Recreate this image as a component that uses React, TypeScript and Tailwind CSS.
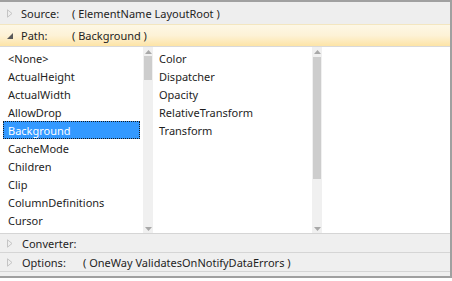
import React from 'react';

const leftItems = [
  '<None>',
  'ActualHeight',
  'ActualWidth',
  'AllowDrop',
  'Background',
  'CacheMode',
  'Children',
  'Clip',
  'ColumnDefinitions',
  'Cursor',
];

const rightItems = ['Color', 'Dispatcher', 'Opacity', 'RelativeTransform', 'Transform'];

const Collapsed = () => (
  <svg width="6" height="9" viewBox="0 0 6 9" className="shrink-0">
    <path d="M0.5 0.8 L5 4.5 L0.5 8.2 Z" fill="none" stroke="#c4c4c4" strokeWidth="1" />
  </svg>
);

const Expanded = () => (
  <svg width="6" height="6" viewBox="0 0 6 6" className="shrink-0">
    <path d="M6 0 L6 6 L0 6 Z" fill="#595959" />
  </svg>
);

const ScrollBar = ({ thumbTop, thumbHeight }: { thumbTop: number; thumbHeight: number }) => (
  <div className="relative w-[10px] h-full bg-[#f0f0f0] shrink-0">
    <svg width="7" height="4" viewBox="0 0 7 4" className="absolute left-[1.5px] top-[3px]">
      <path d="M3.5 0 L7 4 L0 4 Z" fill="#a8a8a8" />
    </svg>
    <div
      className="absolute left-[1px] w-[8px] bg-[#cdcdcd]"
      style={{ top: thumbTop, height: thumbHeight }}
    />
    <svg width="7" height="4" viewBox="0 0 7 4" className="absolute left-[1.5px] bottom-[2px]">
      <path d="M0 0 L7 0 L3.5 4 Z" fill="#a8a8a8" />
    </svg>
  </div>
);

const App: React.FC = () => {
  return (
    <div
      className="w-[452px] h-[281px] bg-white text-[11px] text-[#1e1e1e] leading-none"
      style={{ fontFamily: '"Noto Sans", "Open Sans", sans-serif' }}
    >
      <div className="h-[278px] flex flex-col bg-[#f0f0f0] border-t-2 border-r-2 border-b-2 border-[#a0a0a0]">
        {/* Source */}
        <div className="h-[22px] flex items-center bg-[#eeeeee] pl-[7px]">
          <Collapsed />
          <span className="ml-[8px] w-[51px]">Source:</span>
          <span>( ElementName LayoutRoot )</span>
        </div>

        {/* Path */}
        <div className="h-[22px] flex items-center pl-[7px] bg-gradient-to-b from-[#fdf7e6] via-[#fdf2d6] to-[#fde4a6] border-t border-[#f3e6c0]">
          <Expanded />
          <span className="ml-[8px] w-[51px]">Path:</span>
          <span>( Background )</span>
        </div>

        {/* Lists */}
        <div className="h-[187px] flex bg-white border-t border-[#d9d9d9]">
          <div className="w-[143px] pt-[2px] px-[3px] shrink-0">
            {leftItems.map((item) => (
              <div
                key={item}
                className={`h-[18px] flex items-center pl-[5px] pt-[1px] ${
                  item === 'Background'
                    ? 'bg-[#3399ff] text-white outline-1 outline-dotted outline-[#1a1a1a] -outline-offset-1'
                    : ''
                }`}
              >
                {item}
              </div>
            ))}
          </div>
          <ScrollBar thumbTop={9} thumbHeight={24} />
          <div className="w-[159px] pt-[2px] pl-[6px] shrink-0">
            {rightItems.map((item) => (
              <div key={item} className="h-[18px] flex items-center pt-[1px]">
                {item}
              </div>
            ))}
          </div>
          <ScrollBar thumbTop={10} thumbHeight={122} />
          <div className="flex-1" />
        </div>

        {/* Converter */}
        <div className="h-[19px] flex items-center pl-[7px] pt-[1px] border-t border-[#d5d5d5] bg-[#efefef]">
          <Collapsed />
          <span className="ml-[9px]">Converter:</span>
        </div>

        {/* Options */}
        <div className="h-[19px] flex items-center pl-[7px] pt-[1px] border-t border-[#d5d5d5] bg-[#efefef]">
          <Collapsed />
          <span className="ml-[9px] w-[61px]">Options:</span>
          <span>( OneWay ValidatesOnNotifyDataErrors )</span>
        </div>

        <div className="flex-1 border-t border-[#d5d5d5] bg-[#f0f0f0]" />
      </div>
    </div>
  );
};

export default App;
